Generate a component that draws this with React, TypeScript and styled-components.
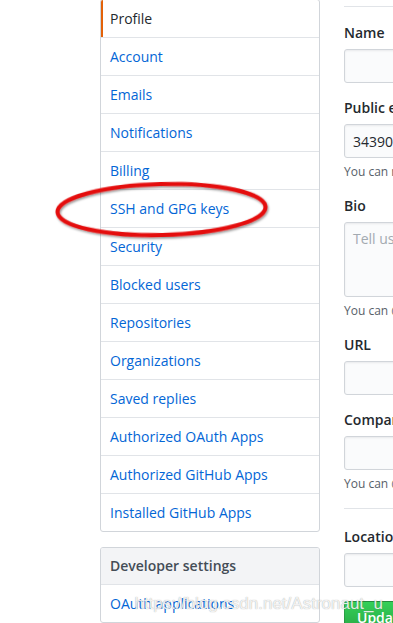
import styled, { createGlobalStyle } from "styled-components"

const GlobalStyle = createGlobalStyle`
  html, body {
    margin: 0;
    padding: 0;
    background: #fff;
    overflow: hidden;
  }
  body {
    font-family: "Open Sans", "Noto Sans", "Liberation Sans", sans-serif;
    font-size: 14px;
    color: #24292e;
  }
`

const navItems = [
  "Profile",
  "Account",
  "Emails",
  "Notifications",
  "Billing",
  "SSH and GPG keys",
  "Security",
  "Blocked users",
  "Repositories",
  "Organizations",
  "Saved replies",
  "Authorized OAuth Apps",
  "Authorized GitHub Apps",
  "Installed GitHub Apps",
]

export default function App() {
  return (
    <>
      <GlobalStyle />
      <PageStyle>
        <SideStyle>
          <MenuStyle $cut>
            {navItems.map((item, i) => (
              <MenuItemStyle key={item} $selected={i === 0}>
                {item}
              </MenuItemStyle>
            ))}
          </MenuStyle>
          <MenuStyle>
            <MenuHeadingStyle>Developer settings</MenuHeadingStyle>
            <MenuItemStyle>OAuth applications</MenuItemStyle>
          </MenuStyle>
        </SideStyle>

        <MainStyle>
          <SubheadStyle>Public profile</SubheadStyle>

          <GroupStyle>
            <LabelStyle>Name</LabelStyle>
            <InputStyle type="text" />
          </GroupStyle>

          <GroupStyle>
            <LabelStyle>Public email</LabelStyle>
            <InputStyle type="text" defaultValue="3439068652@qq.com" />
            <NoteStyle>
              You can manage verified email addresses in your email settings.
            </NoteStyle>
          </GroupStyle>

          <GroupStyle>
            <LabelStyle>Bio</LabelStyle>
            <TextareaStyle placeholder="Tell us a little bit about yourself" />
            <NoteStyle>
              You can @mention other users and organizations to link to them.
            </NoteStyle>
          </GroupStyle>

          <GroupStyle>
            <LabelStyle>URL</LabelStyle>
            <InputStyle type="text" />
          </GroupStyle>

          <GroupStyle>
            <LabelStyle>Company</LabelStyle>
            <InputStyle type="text" />
            <NoteStyle>
              You can @mention your company's GitHub organization to link it.
            </NoteStyle>
          </GroupStyle>

          <RuleStyle />

          <GroupStyle>
            <LabelStyle>Location</LabelStyle>
            <InputStyle type="text" />
          </GroupStyle>

          <ButtonStyle>Update profile</ButtonStyle>
        </MainStyle>

        <MarkStyle width="225" height="66" viewBox="0 0 225 66">
          <defs>
            <filter id="shade" x="-10%" y="-30%" width="120%" height="160%">
              <feDropShadow dx="1" dy="1.5" stdDeviation="1.2" floodColor="#000" floodOpacity="0.45" />
            </filter>
          </defs>
          <ellipse
            cx="111.5"
            cy="31.5"
            rx="104"
            ry="25.5"
            transform="rotate(-1.4 111.5 31.5)"
            fill="none"
            stroke="#e40b0b"
            strokeWidth="4"
            filter="url(#shade)"
          />
        </MarkStyle>

        <WatermarkStyle>https://blog.csdn.net/Astronaut_u</WatermarkStyle>
      </PageStyle>
    </>
  )
}

const PageStyle = styled.div`
  position: relative;
  display: flex;
  gap: 24px;
  padding-left: 100px;
  height: 623px;
  overflow: hidden;
`

const SideStyle = styled.div`
  flex: 0 0 220px;
  display: flex;
  flex-direction: column;
  gap: 15px;
`

const MenuStyle = styled.nav<{ $cut?: boolean }>`
  border: 1px solid #d1d5da;
  border-radius: 3px;
  background: #fff;
  margin-top: ${p => (p.$cut ? "-1px" : "0")};
  overflow: hidden;
`

const MenuItemStyle = styled.a<{ $selected?: boolean }>`
  position: relative;
  display: block;
  padding: 8px 9px;
  line-height: 21px;
  color: ${p => (p.$selected ? "#24292e" : "#0366d6")};
  text-decoration: none;
  border-bottom: 1px solid #e1e4e8;
  white-space: nowrap;

  &:last-child {
    border-bottom: 0;
  }

  &::before {
    content: "";
    display: ${p => (p.$selected ? "block" : "none")};
    position: absolute;
    left: 0;
    top: 0;
    bottom: 0;
    width: 2px;
    background: #e36209;
  }
`

const MenuHeadingStyle = styled.h3`
  margin: 0;
  padding: 8px 9px;
  line-height: 20px;
  font-size: 14px;
  font-weight: 600;
  color: #444d56;
  background: #f3f4f6;
  border-bottom: 1px solid #e1e4e8;
`

const MainStyle = styled.div`
  flex: 1;
  min-width: 0;
`

const SubheadStyle = styled.h2`
  margin: -32px 0 16px;
  padding-bottom: 8px;
  font-size: 24px;
  line-height: 30px;
  font-weight: 400;
  white-space: nowrap;
  color: transparent;
  border-bottom: 1px solid #e1e4e8;
`

const GroupStyle = styled.div`
  margin-bottom: 15px;
`

const LabelStyle = styled.label`
  display: block;
  margin-bottom: 6px;
  line-height: 20px;
  font-weight: 600;
  color: #24292e;
  white-space: nowrap;
`

const InputStyle = styled.input`
  box-sizing: border-box;
  display: block;
  width: 440px;
  height: 34px;
  padding: 6px 8px;
  font-family: inherit;
  font-size: 14px;
  color: #24292e;
  background: #fafbfc;
  border: 1px solid #d1d5da;
  border-radius: 3px;
  box-shadow: inset 0 1px 2px rgba(27, 31, 35, 0.075);
  outline: none;
`

const TextareaStyle = styled.textarea`
  box-sizing: border-box;
  display: block;
  width: 440px;
  height: 75px;
  padding: 6px 8px;
  font-family: inherit;
  font-size: 14px;
  line-height: 20px;
  color: #24292e;
  background: #fafbfc;
  border: 1px solid #d1d5da;
  border-radius: 3px;
  box-shadow: inset 0 1px 2px rgba(27, 31, 35, 0.075);
  resize: none;
  outline: none;

  &::placeholder {
    color: #a3aab1;
  }
`

const NoteStyle = styled.p`
  margin: 5px 0 0;
  font-size: 12px;
  line-height: 18px;
  color: #586069;
  white-space: nowrap;
`

const RuleStyle = styled.hr`
  margin: 0 0 18px;
  border: 0;
  border-top: 1px solid #e1e4e8;
`

const ButtonStyle = styled.button`
  margin-top: -1px;
  padding: 6px 12px;
  font-family: inherit;
  font-size: 14px;
  line-height: 20px;
  font-weight: 600;
  color: #fff;
  background-image: linear-gradient(-180deg, #34d058 0%, #28a745 90%);
  border: 1px solid rgba(27, 31, 35, 0.2);
  border-radius: 3px;
  white-space: nowrap;
`

const MarkStyle = styled.svg`
  position: absolute;
  left: 50px;
  top: 178px;
  overflow: visible;
  pointer-events: none;
`

const WatermarkStyle = styled.span`
  position: absolute;
  right: 10px;
  top: 594px;
  font-family: "Liberation Sans", Arial, sans-serif;
  font-size: 17px;
  color: rgba(255, 255, 255, 0.85);
  text-shadow: 0 0 1px rgba(90, 90, 90, 0.6);
  white-space: nowrap;
  pointer-events: none;
`
